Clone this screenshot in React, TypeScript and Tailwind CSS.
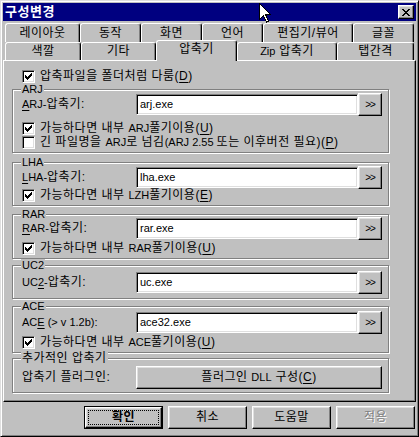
import React from "react";

const FONT = "font-['Liberation_Sans','Noto_Sans_CJK_KR',sans-serif]";
const BEVEL =
  "border border-t-white border-l-white border-r-black border-b-black shadow-[inset_-1px_-1px_0_#808080,inset_1px_1px_0_#dfdfdf]";
const SUNKEN =
  "border border-t-[#808080] border-l-[#808080] border-r-white border-b-white shadow-[inset_1px_1px_0_#000,inset_-1px_-1px_0_#dfdfdf]";

function U({ children }: { children: React.ReactNode }) {
  return <span className="underline underline-offset-[2px] decoration-[1px]">{children}</span>;
}
function Lt({ children }: { children: React.ReactNode }) {
  return <span className="text-[11px] tracking-normal">{children}</span>;
}

function Box({ checked }: { checked: boolean }) {
  return (
    <div className={`w-[13px] h-[13px] shrink-0 bg-white flex items-center justify-center ${SUNKEN}`}>
      {checked && (
        <svg width="7" height="7" viewBox="0 0 7 7" shapeRendering="crispEdges">
          <path
            fill="#000"
            d="M6 0h1v1h-1z M5 1h2v1h-2z M0 2h1v1h-1z M4 2h3v1h-3z M0 3h2v1h-2z M3 3h3v1h-3z M0 4h5v1h-5z M1 5h3v1h-3z M2 6h1v1h-1z"
          />
        </svg>
      )}
    </div>
  );
}

function Check({ checked, children, extra }: { checked: boolean; children: React.ReactNode; extra?: string }) {
  return (
    <div className={`flex items-center h-[13px] pl-[9px] ${extra ?? ""}`}>
      <Box checked={checked} />
      <div className="ml-[5px] text-[12px] leading-[13px] whitespace-nowrap">{children}</div>
    </div>
  );
}

function PathRow({ label, value, extra }: { label: React.ReactNode; value: string; extra?: string }) {
  return (
    <div className={`flex items-center h-[23px] pl-[9px] ${extra ?? ""}`}>
      <div className="w-[114px] text-[12px] leading-[13px] whitespace-nowrap">{label}</div>
      <div className={`w-[222px] h-[21px] bg-white flex items-center pl-[3px] text-[11px] tracking-normal ${SUNKEN}`}>{value}</div>
      <div className={`w-[24px] h-[23px] flex items-center justify-center text-[10px] tracking-[-1px] ${BEVEL}`}>&gt;&gt;</div>
    </div>
  );
}

function Group({ label, h, mt, pt, children }: { label: React.ReactNode; h: string; mt: string; pt: string; children: React.ReactNode }) {
  return (
    <div
      className={`relative ml-[8px] w-[377px] border border-[#808080] shadow-[1px_1px_0_#fff,inset_1px_1px_0_#fff] ${h} ${mt} ${pt}`}
    >
      <div className="absolute left-[8px] -top-[7px] bg-[#c0c0c0] px-[1px] text-[12px] leading-[13px] whitespace-nowrap">
        {label}
      </div>
      {children}
    </div>
  );
}

function Tab({ w, label, active, h }: { w: string; label: React.ReactNode; active?: boolean; h?: string }) {
  const base =
    "shrink-0 flex items-center justify-center border-t border-l border-r border-t-white border-l-white border-r-black rounded-t-[3px] shadow-[inset_-1px_0_0_#808080] bg-[#c0c0c0] text-[12px] leading-[13px] whitespace-nowrap";
  if (active) {
    return <div className={`${base} ${w} h-[21px] -mb-px relative z-10 pb-[3px]`}>{label}</div>;
  }
  return <div className={`${base} ${w} ${h ?? "h-[18px]"}`}>{label}</div>;
}

function Btn({ children, def, disabled }: { children: React.ReactNode; def?: boolean; disabled?: boolean }) {
  if (def) {
    return (
      <div className="w-[79px] h-[23px] border border-black">
        <div className={`w-full h-full flex items-center justify-center ${BEVEL} p-[2px]`}>
          <div className="w-full h-full border border-dotted border-black flex items-center justify-center text-[12px] font-bold leading-[13px]">
            {children}
          </div>
        </div>
      </div>
    );
  }
  return (
    <div
      className={`w-[79px] h-[23px] flex items-center justify-center text-[12px] leading-[13px] ${BEVEL} ${
        disabled ? "text-[#808080] [text-shadow:1px_1px_0_#fff]" : ""
      }`}
    >
      {children}
    </div>
  );
}

export default function App() {
  return (
    <div
      className={`relative w-[419px] h-[437px] bg-[#c0c0c0] text-black tracking-[0.5px] ${FONT} border border-t-[#dfdfdf] border-l-[#dfdfdf] border-r-black border-b-black shadow-[inset_1px_1px_0_#fff,inset_-1px_-1px_0_#808080] p-[2px] flex flex-col overflow-hidden`}
    >
      {/* title bar */}
      <div className="h-[18px] bg-[#000080] flex items-center justify-between pl-[2px] pr-[2px] shrink-0">
        <div className="text-white font-bold text-[13px] leading-[14px]">구성변경</div>
        <div className={`w-[16px] h-[14px] flex items-center justify-center bg-[#c0c0c0] ${BEVEL}`}>
          <svg width="8" height="7" viewBox="0 0 8 7" shapeRendering="crispEdges">
            <path
              fill="#000"
              d="M0 0h2v1h-2z M6 0h2v1h-2z M1 1h2v1h-2z M5 1h2v1h-2z M2 2h4v1h-4z M3 3h2v1h-2z M2 4h4v1h-4z M1 5h2v1h-2z M5 5h2v1h-2z M0 6h2v1h-2z M6 6h2v1h-2z"
            />
          </svg>
        </div>
      </div>

      {/* tabs row 1 */}
      <div className="flex mt-[2px] ml-[2px] h-[19px] -mb-[2px] shrink-0">
        <Tab w="w-[75px]" h="h-[19px]" label="레이아웃" />
        <Tab w="w-[61px]" h="h-[19px]" label="동작" />
        <Tab w="w-[61px]" h="h-[19px]" label="화면" />
        <Tab w="w-[61px]" h="h-[19px]" label="언어" />
        <Tab w="w-[90px]" h="h-[19px]" label="편집기/뷰어" />
        <Tab w="w-[61px]" h="h-[19px]" label="글꼴" />
      </div>
      {/* tabs row 2 */}
      <div className="flex items-end ml-[2px] h-[20px] shrink-0">
        <Tab w="w-[76px]" label="색깔" />
        <Tab w="w-[75px]" label="기타" />
        <Tab w="w-[81px]" label="압축기" active />
        <Tab w="w-[100px]" label={<><Lt>Zip</Lt>&nbsp;압축기</>} />
        <Tab w="w-[77px]" label="탭간격" />
      </div>

      {/* panel */}
      <div className="h-[342px] shrink-0 border border-t-white border-l-white border-r-black border-b-black shadow-[inset_-1px_-1px_0_#808080] flex flex-col">
        <Check checked extra="mt-[9px] pl-[18px]">
          압축파일을 폴더처럼 다룸(<U>D</U>)
        </Check>

        <Group label={<Lt>ARJ</Lt>} h="h-[64px]" mt="mt-[6px]" pt="pt-[3px]">
          <PathRow label={<><Lt><U>A</U>RJ-</Lt>압축기:</>} value="arj.exe" />
          <Check checked extra="mt-[6px]">
            가능하다면 내부 <Lt>ARJ</Lt>풀기이용(<U>U</U>)
          </Check>
          <Check checked={false} extra="mt-[1px]">
            긴 파일명을 <Lt>ARJ</Lt>로 넘김<Lt>(ARJ 2.55 </Lt>또는 이후버전 필요)(<U>P</U>)
          </Check>
        </Group>

        <Group label={<Lt>LHA</Lt>} h="h-[44px]" mt="mt-[9px]" pt="pt-[3px]">
          <PathRow label={<><Lt><U>L</U>HA-</Lt>압축기:</>} value="lha.exe" />
          <Check checked>
            가능하다면 내부 <Lt>LZH</Lt>풀기이용(<U>E</U>)
          </Check>
        </Group>

        <Group label={<Lt>RAR</Lt>} h="h-[45px]" mt="mt-[8px]" pt="pt-[2px]">
          <PathRow label={<><Lt><U>R</U>AR-</Lt>압축기:</>} value="rar.exe" />
          <Check checked extra="mt-[2px]">
            가능하다면 내부 <Lt>RAR</Lt>풀기이용(<U>U</U>)
          </Check>
        </Group>

        <Group label={<Lt>UC2</Lt>} h="h-[34px]" mt="mt-[6px]" pt="pt-[5px]">
          <PathRow label={<><Lt>UC<U>2</U>-</Lt>압축기:</>} value="uc.exe" />
        </Group>

        <Group label={<Lt>ACE</Lt>} h="h-[47px]" mt="mt-[7px]" pt="pt-[4px]">
          <PathRow label={<Lt>AC<U>E</U> (&gt; v 1.2b):</Lt>} value="ace32.exe" />
          <Check checked extra="mt-[2px]">
            가능하다면 내부 <Lt>ACE</Lt>풀기이용(<U>U</U>)
          </Check>
        </Group>

        <Group label="추가적인 압축기" h="h-[35px]" mt="mt-[5px]" pt="pt-[7px]">
          <div className="flex items-center h-[23px] pl-[9px]">
            <div className="w-[114px] text-[12px] leading-[13px] whitespace-nowrap">압축기 플러그인:</div>
            <div className={`w-[246px] h-[23px] flex items-center justify-center text-[12px] leading-[13px] ${BEVEL}`}>
              플러그인&nbsp;<Lt>DLL</Lt>&nbsp;구성(<U>C</U>)
            </div>
          </div>
        </Group>
      </div>

      {/* buttons */}
      <div className="flex justify-end gap-[5px] mt-[4px] pr-[1px] shrink-0">
        <Btn def>확인</Btn>
        <Btn>취소</Btn>
        <Btn>도움말</Btn>
        <Btn disabled>적용</Btn>
      </div>

      {/* mouse cursor */}
      <svg
        className="absolute left-[258px] top-[2px]"
        width="12"
        height="20"
        viewBox="0 0 12 20"
        shapeRendering="crispEdges"
      >
        <path d="M0.5 0.5 L0.5 16.5 L4.5 12.5 L7.5 19 L9.5 18 L6.5 11.5 L11.5 11.5 Z" fill="#fff" stroke="#000" strokeWidth="1" />
      </svg>
    </div>
  );
}
